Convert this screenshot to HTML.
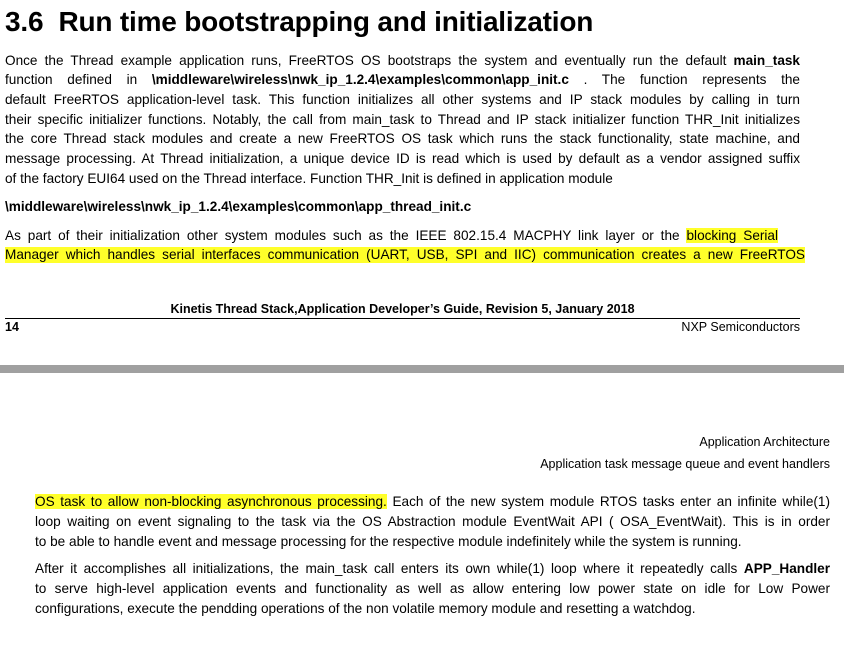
<!DOCTYPE html>
<html><head><meta charset="utf-8"><style>
body{margin:0;width:844px;height:656px;background:#fff;position:relative;overflow:hidden;font-family:"Liberation Sans",Arial,sans-serif;color:#000}
.l{position:absolute;white-space:nowrap;font-size:13.6px;line-height:16px}
.j{text-align:justify;text-align-last:justify;white-space:normal;height:16px;overflow:visible}
.a{left:5px;width:795px}
.b{left:35px;width:795px}
.hl{background:#ffff2a}
b{font-weight:bold}
</style></head><body>
<div style="position:absolute;left:5px;top:6px;font-size:28px;font-weight:bold;white-space:nowrap;letter-spacing:-0.2px">3.6&nbsp; Run time bootstrapping and initialization</div>

<div class="l j a" style="top:53px">Once the Thread example application runs, FreeRTOS OS bootstraps the system and eventually run the default <b>main_task</b></div>
<div class="l j a" style="top:72px">function defined in <b>\middleware\wireless\nwk_ip_1.2.4\examples\common\app_init.c</b> . The function represents the</div>
<div class="l j a" style="top:92px">default FreeRTOS application-level task. This function initializes all other systems and IP stack modules by calling in turn</div>
<div class="l j a" style="top:112px">their specific initializer functions. Notably, the call from main_task to Thread and IP stack initializer function THR_Init initializes</div>
<div class="l j a" style="top:131px">the core Thread stack modules and create a new FreeRTOS OS task which runs the stack functionality, state machine, and</div>
<div class="l j a" style="top:151px">message processing. At Thread initialization, a unique device ID is read which is used by default as a vendor assigned suffix</div>
<div class="l" style="top:171px;left:5px">of the factory EUI64 used on the Thread interface. Function THR_Init is defined in application module</div>
<div class="l" style="top:199px;left:5px"><b>\middleware\wireless\nwk_ip_1.2.4\examples\common\app_thread_init.c</b></div>
<div class="l j" style="top:228px;left:5px;width:773px">As part of their initialization other system modules such as the IEEE 802.15.4 MACPHY link layer or the <span class="hl">blocking Serial</span></div>
<div class="l j hl" style="top:247px;left:5px;width:800px">Manager which handles serial interfaces communication (UART, USB, SPI and IIC) communication creates a new FreeRTOS</div>

<div style="position:absolute;top:302px;left:5px;width:795px;text-align:center;font-size:12.5px;font-weight:bold;white-space:nowrap">Kinetis Thread Stack,Application Developer’s Guide, Revision 5, January 2018</div>
<div style="position:absolute;top:318px;left:5px;width:795px;height:1px;background:#000"></div>
<div style="position:absolute;top:320px;left:5px;font-size:12.5px;font-weight:bold">14</div>
<div style="position:absolute;top:320px;right:44px;font-size:12.5px">NXP Semiconductors</div>
<div style="position:absolute;top:365px;left:0;width:844px;height:8px;background:#a0a0a0"></div>

<div style="position:absolute;top:435px;right:14px;font-size:12.5px">Application Architecture</div>
<div style="position:absolute;top:457px;right:14px;font-size:12.5px">Application task message queue and event handlers</div>

<div class="l j b" style="top:494px"><span class="hl">OS task to allow non-blocking asynchronous processing.</span> Each of the new system module RTOS tasks enter an infinite while(1)</div>
<div class="l j b" style="top:514px">loop waiting on event signaling to the task via the OS Abstraction module EventWait API ( OSA_EventWait). This is in order</div>
<div class="l" style="top:534px;left:35px">to be able to handle event and message processing for the respective module indefinitely while the system is running.</div>
<div class="l j b" style="top:561px">After it accomplishes all initializations, the main_task call enters its own while(1) loop where it repeatedly calls <b>APP_Handler</b></div>
<div class="l j b" style="top:581px">to serve high-level application events and functionality as well as allow entering low power state on idle for Low Power</div>
<div class="l" style="top:601px;left:35px">configurations, execute the pendding operations of the non volatile memory module and resetting a watchdog.</div>
</body></html>
